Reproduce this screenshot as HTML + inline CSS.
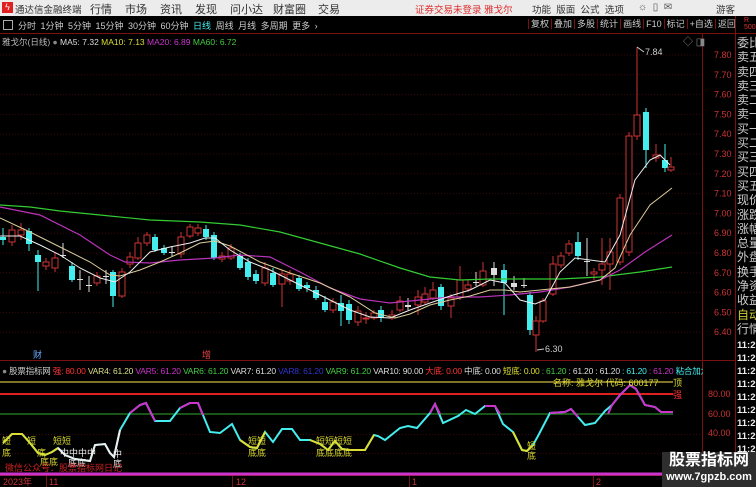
<!DOCTYPE html><html><head><meta charset="utf-8"><style>
*{margin:0;padding:0}body{width:756px;height:487px;background:#000;overflow:hidden;position:relative;font-family:"Liberation Sans","Noto Sans CJK SC",sans-serif;font-size:10px}
.a{position:absolute;white-space:nowrap}
</style></head><body>
<div class="a" style="left:0;top:0;width:756px;height:16px;background:#ececec"></div>
<div class="a" style="left:2px;top:2px;width:11px;height:11px;background:#e02020;color:#fff;font-size:9px;line-height:11px;text-align:center">ϟ</div>
<div class="a" style="left:15px;top:2px;color:#333;font-size:9.5px">通达信金融终端</div>
<div class="a" style="left:90px;top:1px;color:#333;font-size:11px">行情</div>
<div class="a" style="left:125px;top:1px;color:#333;font-size:11px">市场</div>
<div class="a" style="left:160px;top:1px;color:#333;font-size:11px">资讯</div>
<div class="a" style="left:195px;top:1px;color:#333;font-size:11px">发现</div>
<div class="a" style="left:230px;top:1px;color:#333;font-size:11px">问小达</div>
<div class="a" style="left:273px;top:1px;color:#333;font-size:11px">财富圈</div>
<div class="a" style="left:318px;top:1px;color:#333;font-size:11px">交易</div>
<div class="a" style="left:415px;top:2px;color:#e03030;font-size:9.5px">证券交易未登录 雅戈尔</div>
<div class="a" style="left:532px;top:2px;color:#333;font-size:9.5px">功能 &nbsp;版面 &nbsp;公式 &nbsp;选项</div>
<div class="a" style="left:638px;top:2px;color:#555;font-size:10px">☼ &nbsp;▯ &nbsp;✉</div>
<div class="a" style="left:716px;top:2px;color:#333;font-size:9.5px">游客</div>
<div class="a" style="left:0;top:16px;width:756px;height:17px;border-bottom:1px solid #7a1010"></div>
<div class="a" style="left:3px;top:20px;width:8px;height:8px;border:1px solid #aaa"></div>
<div class="a" style="left:18px;top:19px;color:#ccc;font-size:9px;word-spacing:2px">分时 1分钟 5分钟 15分钟 30分钟 60分钟 <span style="color:#4ee">日线</span> 周线 月线 多周期 更多 ›</div>
<div class="a" style="left:528px;top:17px;height:15px;color:#ccc;font-size:9px;line-height:15px">
<span style="border-left:1px solid #7a1010;padding:0 2px">复权</span><span style="border-left:1px solid #7a1010;padding:0 2px">叠加</span><span style="border-left:1px solid #7a1010;padding:0 2px">多股</span><span style="border-left:1px solid #7a1010;padding:0 2px">统计</span><span style="border-left:1px solid #7a1010;padding:0 2px">画线</span><span style="border-left:1px solid #7a1010;padding:0 2px">F10</span><span style="border-left:1px solid #7a1010;padding:0 2px">标记</span><span style="border-left:1px solid #7a1010;padding:0 2px">+自选</span><span style="border-left:1px solid #7a1010;padding:0 2px">返回</span></div>
<div class="a" style="left:744px;top:17px;color:#e03030;font-size:7px;line-height:7px">R<br>500</div>
<div class="a" style="left:2px;top:36px;font-size:8.5px;color:#bbb">雅戈尔(日线) <span style="color:#888">●</span> <span style="color:#ddd">MA5: 7.32</span> <span style="color:#dd3">MA10: 7.13</span> <span style="color:#c3c">MA20: 6.89</span> <span style="color:#4c4">MA60: 6.72</span></div>
<svg class="a" style="left:0;top:0" width="756" height="487" id="s">
<g stroke="#7a1010" stroke-width="1"><line x1="702.5" y1="34" x2="702.5" y2="487"/><line x1="735.5" y1="16" x2="735.5" y2="487"/><line x1="0" y1="360.5" x2="735" y2="360.5"/><line x1="0" y1="475.5" x2="702" y2="475.5"/></g>
<g id="grid" stroke="#3a0808" stroke-dasharray="1,2"></g>
<g id="candles"></g>
<polyline fill="none" stroke="#3c3" stroke-width="1.2" points="0,205 30,207 60,211 100,215 150,220 200,222 240,225 280,232 320,243 360,254 400,268 430,277 460,280 490,279 520,279 560,279 600,277 640,272 672,267"/>
<polyline fill="none" stroke="#b3b" stroke-width="1.2" points="0,207 40,215 80,235 110,255 125,262 150,263 180,260 215,258 240,255 270,257 300,272 330,288 360,299 390,303 420,300 450,297 480,297 510,295 540,292 570,287 600,280 620,270 645,252 672,235"/>
<polyline fill="none" stroke="#dc9" stroke-width="1" points="0,218 30,232 60,247 90,262 110,275 120,276 140,270 160,262 180,253 200,243 215,241 230,246 260,262 290,273 320,283 350,297 375,313 395,318 410,314 430,305 450,300 470,296 490,290 505,290 520,292 540,290 570,287 600,280 615,268 630,235 650,205 672,188"/>
<polyline fill="none" stroke="#eee" stroke-width="1" points="0,236 20,236 40,245 60,255 80,268 100,278 115,282 130,272 150,252 170,247 190,243 205,238 215,238 230,250 250,262 270,270 290,280 310,290 330,300 350,310 370,317 390,318 410,310 430,303 450,296 470,290 490,280 505,283 520,300 535,304 545,300 560,272 575,258 590,260 605,262 620,235 635,180 650,160 660,155 670,165"/>
<text x="645" y="55" fill="#ccc" font-size="9">7.84</text><line x1="637" y1="47" x2="644" y2="52" stroke="#ccc"/>
<text x="545" y="352" fill="#ccc" font-size="9">6.30</text><line x1="537" y1="350" x2="544" y2="349" stroke="#ccc"/>
<text x="683" y="45" fill="#888" font-size="10">◇ ◨</text>
<g id="px" fill="#c33" font-size="9"></g>
<line x1="0" y1="382" x2="673" y2="382" stroke="#aa9933" stroke-width="1.5"/>
<line x1="0" y1="394" x2="673" y2="394" stroke="#e02020" stroke-width="2"/>
<line x1="0" y1="414" x2="673" y2="414" stroke="#2a8a2a" stroke-width="1.2"/>
<line x1="0" y1="474" x2="702" y2="474" stroke="#c3c" stroke-width="3"/>
<polyline fill="none" stroke="#4ee" stroke-width="2" points="3,443 12,434 22,434 30,443 38,453 45,455 52,452 58,448 65,455 75,459 90,461 95,445 105,444 110,453 114,457 120,430 130,413 140,405 146,403 155,421 170,421 180,408 190,403 198,403 210,432 220,433 232,424 240,440 250,447 257,448 265,432 273,442 282,429 292,429 300,440 310,440 320,444 328,450 335,441 342,449 350,450 357,450 365,450 374,435 378,436 385,440 400,428 408,426 417,428 430,413 435,404 443,423 458,416 466,410 475,414 485,406 495,406 503,424 513,432 522,450 527,451 533,445 538,436 550,413 565,412 571,409 585,425 595,423 605,411 612,405 620,395 630,385 636,389 645,405 655,407 661,412 670,412 673,412"/>
<g fill="none" stroke-width="2"><polyline stroke="#dd3" points="3,443 12,434 22,434 30,443 38,453 45,455 52,452 58,448"/><polyline stroke="#eee" points="58,448 65,455 75,459 90,461 95,445 105,444 110,453 114,457 120,430"/>
<polyline stroke="#c3c" points="130,413 140,405 146,403 155,421"/><polyline stroke="#c3c" points="180,408 190,403 198,403 203,415"/>
<polyline stroke="#dd3" points="240,440 250,447 257,448 265,432"/><polyline stroke="#dd3" points="310,440 320,444 328,450 335,441 342,449 350,450 357,450 365,450 374,435"/>
<polyline stroke="#c3c" points="430,413 435,404 440,414"/><polyline stroke="#c3c" points="485,406 495,406 500,414"/><polyline stroke="#dd3" points="513,432 522,450 527,451 533,445"/>
<polyline stroke="#c3c" points="550,413 565,412 571,409 578,417"/><polyline stroke="#c3c" points="608,414 612,405 620,395 630,385 636,389 645,405 655,407 661,412 670,412 673,412"/></g>
<g fill="#dd3" font-size="9"><text x="2" y="444">短</text><text x="2" y="456">底</text><text x="27" y="444">短</text><text x="37" y="456">底</text><text x="53" y="444">短短</text><text x="40" y="465">底底</text><text x="248" y="444">短短</text><text x="248" y="456">底底</text><text x="316" y="444">短短短短</text><text x="316" y="456">底底底底</text><text x="527" y="449">短</text><text x="527" y="459">底</text><text x="113" y="457" fill="#eee">中</text><text x="113" y="467" fill="#eee">底</text><text x="60" y="456" fill="#eee">中中中中</text><text x="68" y="466" fill="#eee">底底</text></g>
<text x="5" y="471" fill="#c22" font-size="9">微信公众号：股票指标网日记</text>
<text x="553" y="386" fill="#dd3" font-size="9">名称: 雅戈尔 代码: 600177</text>
<text x="673" y="386" fill="#dd3" font-size="9">顶</text><text x="673" y="398" fill="#f33" font-size="9">强</text>
<g fill="#c33" font-size="9"><text x="708" y="397">80.00</text><text x="708" y="417">60.00</text><text x="708" y="436">40.00</text></g>
<g fill="#c33" font-size="9"><text x="3" y="485">2023年</text><text x="49" y="485">11</text><text x="236" y="485">12</text><text x="412" y="485">1</text><text x="596" y="485">2</text></g>
<g stroke="#7a1010"><line x1="46.5" y1="476" x2="46.5" y2="487"/><line x1="232.5" y1="476" x2="232.5" y2="487"/><line x1="409.5" y1="476" x2="409.5" y2="487"/><line x1="593.5" y1="476" x2="593.5" y2="487"/></g>
<text x="33" y="358" fill="#6af" font-size="9">财</text><text x="202" y="358" fill="#e44" font-size="9">增</text>
</svg>
<div class="a" style="left:2px;top:365px;font-size:8.5px;letter-spacing:-0.2px;color:#ccc"><span style="color:#888">●</span> 股票指标网 <span style="color:#f33">强: 80.00</span> <span style="color:#dd8">VAR4: 61.20</span> <span style="color:#c3c">VAR5: 61.20</span> <span style="color:#4c4">VAR6: 61.20</span> <span style="color:#ddd">VAR7: 61.20</span> <span style="color:#33c">VAR8: 61.20</span> <span style="color:#4c4">VAR9: 61.20</span> <span style="color:#ddd">VAR10: 90.00</span> <span style="color:#f33">大底: 0.00</span> <span style="color:#ddd">中底: 0.00</span> <span style="color:#dd3">短底: 0.00</span> <span style="color:#4c4">: 61.20</span> <span style="color:#ddd">: 61.20 : 61.20</span> <span style="color:#4ee">: 61.20</span> <span style="color:#c3c">: 61.20</span> <span style="color:#4ee">粘合加龙</span></div>
<div class="a" style="left:703px;top:361px;width:32px;height:14px;background:#000"></div>
<div class="a" style="left:737px;top:36px;width:19px;overflow:hidden;color:#ccc;font-size:12px;line-height:14.3px">委比<br>卖五<br>卖四<br>卖三<br>卖二<br>卖一<br>买一<br>买二<br>买三<br>买四<br>买五<br>现价<br>涨跌<br>涨幅<br>总量<br>外盘<br>换手<br>净资<br>收益<br><span style="color:#cc3">自动</span><br>行情</div>
<div class="a" style="left:737px;top:339px;width:19px;overflow:hidden;color:#eee;font-size:9.5px;font-weight:bold;line-height:13px">11:29<br>11:29<br>11:29<br>11:29<br>11:29<br>11:29<br>11:29<br>11:29<br>11:29<br>11:29<br>11:29</div>
<div class="a" style="left:662px;top:452px;width:94px;height:35px;background:#2e2e2e;color:#fff;text-align:center"><div style="font-size:16px;font-weight:bold;line-height:18px">股票指标网</div><div style="font-size:11px;font-weight:bold;line-height:14px">www.7gpzb.com</div></div>
<script>
var s='http://www.w3.org/2000/svg',g=document.getElementById('grid'),px=document.getElementById('px');
for(var i=0;i<15;i++){var y=55+i*19.8;var l=document.createElementNS(s,'line');l.setAttribute('x1',0);l.setAttribute('x2',702);l.setAttribute('y1',y);l.setAttribute('y2',y);g.appendChild(l);
var t=document.createElementNS(s,'text');t.setAttribute('x',714);t.setAttribute('y',y+3);t.textContent=(7.8-i*0.1).toFixed(2);px.appendChild(t);}
[[434.5],[453.5]].forEach(function(a){var l=document.createElementNS(s,'line');l.setAttribute('x1',0);l.setAttribute('x2',702);l.setAttribute('y1',a[0]);l.setAttribute('y2',a[0]);g.appendChild(l);});
var C=[[3,237,240,228,245,0],[12,230,242,225,246,1],[21,230,235,223,240,1],[29,231,244,228,251,0],[38,255,262,250,291,0],[46,262,266,258,270,1],[55,258,268,253,272,1],[63,255,256,243,258,2],[72,266,280,262,282,0],[80,279,280,270,290,2],[89,285,286,276,292,2],[97,276,283,272,286,1],[106,276,277,270,284,2],[113,272,296,270,307,0],[122,272,296,268,298,1],[130,257,264,252,268,1],[138,243,258,237,260,1],[147,235,243,232,246,1],[155,237,250,234,252,0],[164,248,253,245,255,0],[172,252,253,246,256,2],[181,237,254,232,258,1],[190,227,236,224,238,1],[198,228,233,224,236,1],[206,229,237,225,240,0],[214,235,258,232,260,0],[222,256,259,252,262,1],[231,248,258,244,260,1],[240,256,268,253,270,0],[248,262,277,258,280,0],[256,274,281,270,284,0],[265,268,283,262,286,1],[273,273,285,268,287,0],[282,274,284,270,307,1],[290,274,281,270,285,1],[299,278,289,275,291,0],[307,285,288,282,292,0],[316,290,298,286,300,0],[325,302,310,296,312,0],[333,302,310,298,313,1],[341,303,311,295,326,0],[349,304,320,300,324,0],[358,311,322,306,326,1],[366,318,319,312,324,1],[374,313,318,310,320,1],[381,310,318,306,322,0],[392,315,318,310,320,1],[400,301,310,296,312,1],[408,305,307,298,310,2],[418,297,305,290,315,1],[425,294,302,287,304,1],[433,290,298,282,300,1],[441,287,306,284,310,0],[451,298,306,294,318,1],[460,280,297,266,300,1],[468,285,289,280,292,1],[476,282,283,272,286,2],[483,271,285,262,287,1],[494,268,275,262,286,2],[504,270,283,264,315,0],[514,283,287,276,290,2],[524,285,286,278,288,2],[530,295,330,292,335,0],[536,321,335,316,352,1],[543,301,321,298,323,1],[553,264,294,256,296,1],[561,256,265,252,268,1],[569,244,253,240,256,1],[578,242,256,232,260,0],[587,261,262,238,276,2],[594,272,274,268,280,1],[602,264,270,238,285,1],[610,252,264,238,290,1],[620,198,262,194,265,1],[629,136,252,132,256,1],[637,115,136,47,140,1],[646,112,150,108,168,0],[656,155,158,144,162,1],[665,160,168,144,172,0],[671,167,170,157,172,1]];
var cg=document.getElementById('candles'),h='';
C.forEach(function(c){var col=c[5]==1?'#c33':c[5]==0?'#4ee':'#ddd';h+='<line x1="'+c[0]+'" x2="'+c[0]+'" y1="'+c[3]+'" y2="'+c[4]+'" stroke="'+col+'"/>';
if(c[5]==1)h+='<rect x="'+(c[0]-3)+'" y="'+c[1]+'" width="6" height="'+Math.max(1,c[2]-c[1])+'" fill="#000" stroke="#c33"/>';
else h+='<rect x="'+(c[0]-3)+'" y="'+c[1]+'" width="6" height="'+Math.max(1,c[2]-c[1])+'" fill="'+col+'"/>';});
cg.innerHTML=h;
</script>
</body></html>
